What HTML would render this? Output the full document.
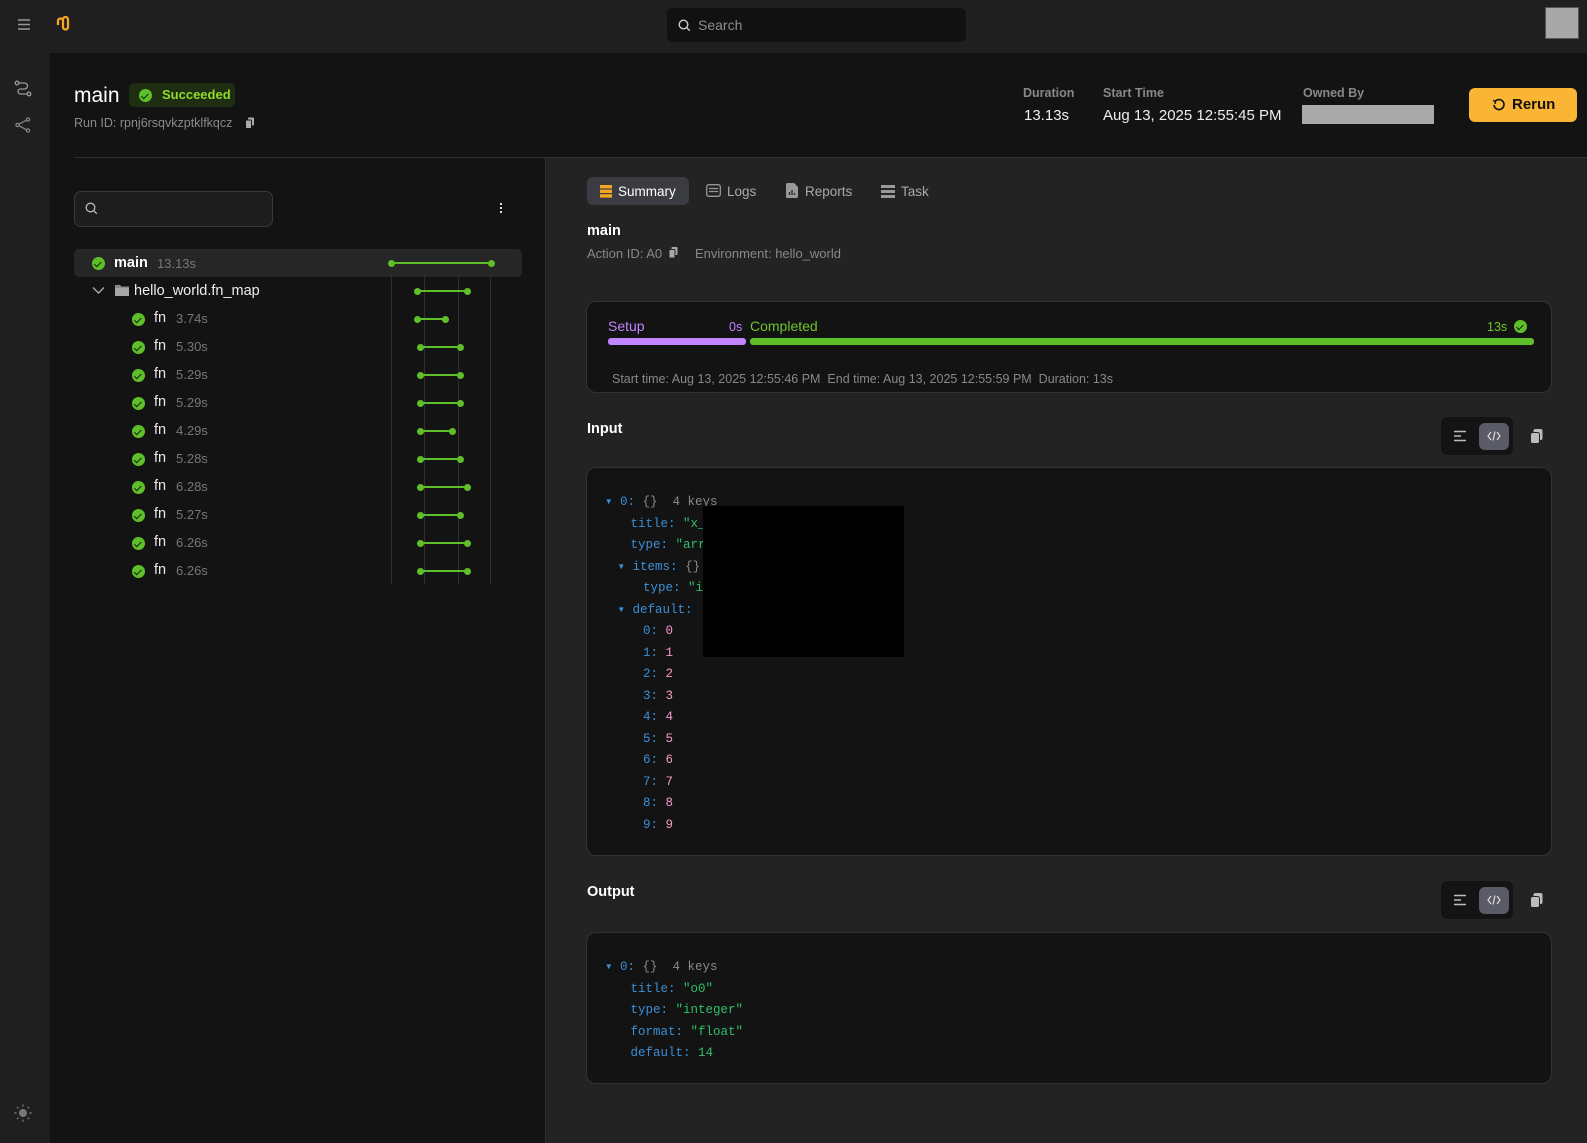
<!DOCTYPE html>
<html><head><meta charset="utf-8"><style>
*{box-sizing:border-box;margin:0;padding:0}
body{width:1587px;height:1143px;background:#131313;font-family:"Liberation Sans",sans-serif;position:relative;overflow:hidden;color:#e8e8e8}
.a{position:absolute}
.mono{font-family:"Liberation Mono",monospace;font-size:12.5px;line-height:21.5px}
.mono div{height:21.5px;white-space:pre}
.i1{padding-left:12.5px}.i2{padding-left:25.5px}.i3{padding-left:38px}
.k{color:#3b8fd6}.s{color:#2fc06a}.n{color:#f49ac8}.g{color:#8a8a8a}
.chk{position:absolute;width:13px;height:13px;border-radius:50%;background:#5fbf2a}
.chk:after{content:"";position:absolute;left:4px;top:2.5px;width:3px;height:5.5px;border:solid #0e2a06;border-width:0 1.6px 1.6px 0;transform:rotate(45deg)}
.bar{position:absolute;height:2px;background:#5fbf2a}
.bar:before,.bar:after{content:"";position:absolute;top:-2.5px;width:7px;height:7px;border-radius:50%;background:#5fbf2a}
.bar:before{left:-3px}.bar:after{right:-3px}
.vl{position:absolute;top:276px;height:308px;width:1px;background:#2e2e2e}
</style></head><body>
<div class="a" style="left:0;top:0;width:1587px;height:53px;background:#1f1f1f"></div>
<div class="a" style="left:0;top:53px;width:50px;height:1090px;background:#1f1f1f"></div>
<svg class="a" style="left:17px;top:18px" width="14" height="13"><path d="M1 2h12M1 6.5h12M1 11h12" stroke="#9a9a9a" stroke-width="1.5"/></svg>
<svg class="a" style="left:55px;top:16px" width="17" height="16" viewBox="0 0 17 16"><path d="M3 9V5a2.5 2.5 0 0 1 5 0v6a2.5 2.5 0 0 0 5 0V5M8 3.5a2.5 2.5 0 0 1 5 0v4" fill="none" stroke="#f5a623" stroke-width="2.3"/></svg>
<div class="a" style="left:667px;top:8px;width:299px;height:34px;background:#111;border-radius:6px"></div>
<svg class="a" style="left:678px;top:19px" width="13" height="13"><circle cx="5.5" cy="5.5" r="4.3" fill="none" stroke="#ccc" stroke-width="1.4"/><path d="M8.6 8.6l3.2 3.2" stroke="#ccc" stroke-width="1.4"/></svg>
<div class="a" style="left:698px;top:17px;font-size:14px;color:#8e8e8e">Search</div>
<div class="a" style="left:1545px;top:7px;width:34px;height:32px;background:#a8a8a8;border:1px solid #555"></div>
<svg class="a" style="left:14px;top:80px" width="18" height="18" viewBox="0 0 18 18"><circle cx="3" cy="3" r="1.8" fill="none" stroke="#9a9a9a" stroke-width="1.3"/><circle cx="15" cy="14" r="1.8" fill="none" stroke="#9a9a9a" stroke-width="1.3"/><path d="M4.5 3h6a3 3 0 0 1 0 6h-4a2.5 2.5 0 0 0 0 5h6.5" fill="none" stroke="#9a9a9a" stroke-width="1.3"/></svg>
<svg class="a" style="left:15px;top:117px" width="16" height="16" viewBox="0 0 16 16"><circle cx="13" cy="2.5" r="1.6" fill="none" stroke="#888" stroke-width="1.2"/><circle cx="2.5" cy="8" r="1.6" fill="none" stroke="#888" stroke-width="1.2"/><circle cx="13" cy="13.5" r="1.6" fill="none" stroke="#888" stroke-width="1.2"/><path d="M4 7.2l7.6-4M4 8.8l7.6 4" stroke="#888" stroke-width="1.2"/></svg>
<svg class="a" style="left:14px;top:1104px" width="18" height="18" viewBox="0 0 18 18"><circle cx="9" cy="9" r="4" fill="#777"/><path d="M9 0.5v2M9 15.5v2M0.5 9h2M15.5 9h2M3 3l1.4 1.4M13.6 13.6l1.4 1.4M3 15l1.4-1.4M13.6 4.4l1.4-1.4" stroke="#777" stroke-width="1.4"/></svg>
<div class="a" style="left:74px;top:84px;font-size:21px;color:#fff">main</div>
<div class="a" style="left:129px;top:83px;width:106px;height:24px;background:#1f2d10;border-radius:5px"></div>
<div class="chk" style="left:139px;top:89px"></div>
<div class="a" style="left:162px;top:87px;font-size:13px;color:#8fdc2a;font-weight:bold">Succeeded</div>
<div class="a" style="left:74px;top:116px;font-size:12.5px;color:#8a8a8a">Run ID: rpnj6rsqvkzptklfkqcz</div>
<svg class="a" style="left:245px;top:117px" width="10" height="12"><rect x="3" y="0.5" width="6" height="8" rx="1" fill="#aaa"/><rect x="0.5" y="3" width="6" height="8.5" rx="1" fill="#aaa" stroke="#131313"/></svg>
<div class="a" style="left:1023px;top:86px;font-size:12.5px;color:#888;font-weight:bold">Duration</div>
<div class="a" style="left:1024px;top:107px;font-size:15px;color:#eee">13.13s</div>
<div class="a" style="left:1103px;top:86px;font-size:12.5px;color:#888;font-weight:bold">Start Time</div>
<div class="a" style="left:1103px;top:107px;font-size:15px;color:#eee">Aug 13, 2025 12:55:45 PM</div>
<div class="a" style="left:1303px;top:86px;font-size:12.5px;color:#888;font-weight:bold">Owned By</div>
<div class="a" style="left:1302px;top:105px;width:132px;height:19px;background:#a9a9a9"></div>
<div class="a" style="left:1469px;top:88px;width:108px;height:34px;background:#fbb535;border-radius:6px"></div>
<svg class="a" style="left:1492px;top:98px" width="14" height="14" viewBox="0 0 14 14"><path d="M3 3.5A5 5 0 1 1 2 7" fill="none" stroke="#111" stroke-width="1.6"/><path d="M1 2.5l2.5 1 -0.5 2.5" fill="none" stroke="#111" stroke-width="1.4"/></svg>
<div class="a" style="left:1512px;top:96px;font-size:15px;color:#111;font-weight:bold">Rerun</div>
<div class="a" style="left:74px;top:157px;width:1513px;height:1px;background:#2e2e2e"></div>
<div class="a" style="left:545px;top:158px;width:1042px;height:985px;background:#232323;border-left:1px solid #2f2f2f"></div>
<div class="a" style="left:74px;top:191px;width:199px;height:36px;border:1px solid #3a3a3a;background:#1d1d1d;border-radius:7px"></div>
<svg class="a" style="left:85px;top:202px" width="14" height="14"><circle cx="5.5" cy="5.5" r="4.3" fill="none" stroke="#bbb" stroke-width="1.3"/><path d="M8.6 8.6l3.2 3.2" stroke="#bbb" stroke-width="1.3"/></svg>
<div class="a" style="left:500px;top:203px;width:2px;height:2px;background:#ddd;box-shadow:0 4px #ddd,0 8px #ddd"></div>
<div class="a" style="left:74px;top:249px;width:448px;height:28px;background:#262626;border-radius:5px"></div>
<div class="vl" style="left:391px"></div><div class="vl" style="left:424px"></div><div class="vl" style="left:458px"></div><div class="vl" style="left:490px"></div>
<div class="chk" style="left:92px;top:257px"></div>
<div class="a" style="left:114px;top:255px;font-size:14.5px;font-weight:bold;color:#fff">main</div>
<div class="a" style="left:157px;top:256px;font-size:13px;color:#777">13.13s</div>
<div class="bar" style="left:391px;top:262px;width:101px"></div>
<svg class="a" style="left:92px;top:286px" width="13" height="9"><path d="M1 1.5l5.5 5.5 5.5-5.5" fill="none" stroke="#aaa" stroke-width="1.4"/></svg>
<svg class="a" style="left:115px;top:284px" width="14" height="12"><path d="M0 1h5l1.5 1.5H14V12H0z" fill="#8a8a8a"/><rect x="0" y="4" width="14" height="8" fill="#a6a6a6"/></svg>
<div class="a" style="left:134px;top:283px;font-size:14.5px;color:#eee">hello_world.fn_map</div>
<div class="bar" style="left:417px;top:290px;width:51px"></div>
<div class="a" style="left:587px;top:177px;width:102px;height:28px;background:#3a3c42;border-radius:6px"></div>
<svg class="a" style="left:600px;top:185px" width="12" height="13"><rect y="0" width="12" height="3.4" fill="#f5a623"/><rect y="4.6" width="12" height="3.4" fill="#f5a623"/><rect y="9.2" width="12" height="3.4" fill="#f5a623"/></svg>
<div class="a" style="left:618px;top:184px;font-size:13.5px;color:#fff">Summary</div>
<svg class="a" style="left:706px;top:184px" width="15" height="13"><rect x="0.7" y="0.7" width="13.6" height="11.6" rx="2" fill="none" stroke="#999" stroke-width="1.3"/><path d="M3 4.5h9M3 7.5h9" stroke="#999" stroke-width="1.3"/></svg>
<div class="a" style="left:727px;top:184px;font-size:13.5px;color:#aaa">Logs</div>
<svg class="a" style="left:786px;top:183px" width="12" height="15"><path d="M0 1.5a1.5 1.5 0 0 1 1.5-1.5H8l4 4v9.5a1.5 1.5 0 0 1-1.5 1.5h-9A1.5 1.5 0 0 1 0 13.5z" fill="#999"/><path d="M3.5 12V9M6 12V7M8.5 12V10" stroke="#232323" stroke-width="1.3"/></svg>
<div class="a" style="left:805px;top:184px;font-size:13.5px;color:#aaa">Reports</div>
<svg class="a" style="left:881px;top:185px" width="14" height="13"><rect y="0" width="14" height="3" fill="#999"/><rect y="5" width="14" height="3" fill="#999"/><rect y="10" width="14" height="3" fill="#999"/></svg>
<div class="a" style="left:901px;top:184px;font-size:13.5px;color:#aaa">Task</div>
<div class="a" style="left:587px;top:223px;font-size:14.5px;font-weight:bold;color:#fff">main</div>
<div class="a" style="left:587px;top:246px;font-size:13px;color:#888">Action ID: A0</div>
<svg class="a" style="left:669px;top:247px" width="9" height="11"><rect x="2.5" y="0" width="6" height="8" rx="1" fill="#aaa"/><rect x="0" y="2.5" width="6" height="8.5" rx="1" fill="#aaa" stroke="#232323"/></svg>
<div class="a" style="left:695px;top:246px;font-size:13px;color:#888">Environment: hello_world</div>
<div class="a" style="left:586px;top:301px;width:966px;height:92px;background:#131313;border:1px solid #333;border-radius:10px"></div>
<div class="a" style="left:608px;top:318px;font-size:14px;color:#c084fc">Setup</div>
<div class="a" style="left:729px;top:320px;font-size:12.5px;color:#c084fc">0s</div>
<div class="a" style="left:750px;top:318px;font-size:14px;color:#6cc52e">Completed</div>
<div class="a" style="left:1487px;top:320px;font-size:12.5px;color:#6cc52e">13s</div>
<div class="chk" style="left:1514px;top:320px"></div>
<div class="a" style="left:608px;top:338px;width:138px;height:7px;background:#c084fc;border-radius:3px"></div>
<div class="a" style="left:750px;top:338px;width:784px;height:7px;background:#5fbf2a;border-radius:3px"></div>
<div class="a" style="left:612px;top:372px;font-size:12.5px;color:#888">Start time: Aug 13, 2025 12:55:46 PM &nbsp;End time: Aug 13, 2025 12:55:59 PM &nbsp;Duration: 13s</div>
<div class="a" style="left:587px;top:421px;font-size:14.5px;font-weight:bold;color:#fff">Input</div>
<div class="a" style="left:1441px;top:417px;width:72px;height:38px;background:#141414;border-radius:6px"></div>
<div class="a" style="left:1479px;top:423px;width:30px;height:27px;background:#5a5b66;border-radius:6px"></div>
<svg class="a" style="left:1453px;top:430px" width="14" height="12"><path d="M1 1.5h12M1 6h7M1 10.5h12" stroke="#bbb" stroke-width="1.4"/></svg>
<svg class="a" style="left:1487px;top:430px" width="14" height="12"><path d="M4 2L1 6l3 4M10 2l3 4-3 4M8 1.5L6 10.5" fill="none" stroke="#ddd" stroke-width="1.2"/></svg>
<svg class="a" style="left:1530px;top:429px" width="13" height="15"><rect x="3.5" y="0" width="9" height="11" rx="2" fill="#bbb"/><rect x="0.5" y="3.5" width="9" height="11" rx="2" fill="#bbb" stroke="#232323"/></svg>
<div class="a" style="left:586px;top:467px;width:966px;height:389px;background:#131313;border:1px solid #333;border-radius:10px"></div>
<div class="a mono" style="left:605px;top:492px"><div><span class="k">▾ 0:</span> <span class="g">{}  4 keys</span></div><div class="i2"><span class="k">title:</span> <span class="s">"x_</span></div><div class="i2"><span class="k">type:</span> <span class="s">"arr</span></div><div class="i1"><span class="k">▾ items:</span> <span class="g">{}</span></div><div class="i3"><span class="k">type:</span> <span class="s">"i</span></div><div class="i1"><span class="k">▾ default:</span></div><div class="i3"><span class="k">0:</span> <span class="n">0</span></div><div class="i3"><span class="k">1:</span> <span class="n">1</span></div><div class="i3"><span class="k">2:</span> <span class="n">2</span></div><div class="i3"><span class="k">3:</span> <span class="n">3</span></div><div class="i3"><span class="k">4:</span> <span class="n">4</span></div><div class="i3"><span class="k">5:</span> <span class="n">5</span></div><div class="i3"><span class="k">6:</span> <span class="n">6</span></div><div class="i3"><span class="k">7:</span> <span class="n">7</span></div><div class="i3"><span class="k">8:</span> <span class="n">8</span></div><div class="i3"><span class="k">9:</span> <span class="n">9</span></div></div>
<div class="a" style="left:703px;top:506px;width:201px;height:151px;background:#000"></div>
<div class="a" style="left:587px;top:884px;font-size:14.5px;font-weight:bold;color:#fff">Output</div>
<div class="a" style="left:1441px;top:881px;width:72px;height:38px;background:#141414;border-radius:6px"></div>
<div class="a" style="left:1479px;top:887px;width:30px;height:27px;background:#5a5b66;border-radius:6px"></div>
<svg class="a" style="left:1453px;top:894px" width="14" height="12"><path d="M1 1.5h12M1 6h7M1 10.5h12" stroke="#bbb" stroke-width="1.4"/></svg>
<svg class="a" style="left:1487px;top:894px" width="14" height="12"><path d="M4 2L1 6l3 4M10 2l3 4-3 4M8 1.5L6 10.5" fill="none" stroke="#ddd" stroke-width="1.2"/></svg>
<svg class="a" style="left:1530px;top:893px" width="13" height="15"><rect x="3.5" y="0" width="9" height="11" rx="2" fill="#bbb"/><rect x="0.5" y="3.5" width="9" height="11" rx="2" fill="#bbb" stroke="#232323"/></svg>
<div class="a" style="left:586px;top:932px;width:966px;height:152px;background:#131313;border:1px solid #333;border-radius:10px"></div>
<div class="a mono" style="left:605px;top:957px"><div><span class="k">▾ 0:</span> <span class="g">{}  4 keys</span></div><div class="i2"><span class="k">title:</span> <span class="s">"o0"</span></div><div class="i2"><span class="k">type:</span> <span class="s">"integer"</span></div><div class="i2"><span class="k">format:</span> <span class="s">"float"</span></div><div class="i2"><span class="k">default:</span> <span class="s">14</span></div></div>
<div class="chk" style="left:132px;top:313px"></div><div class="a" style="left:154px;top:310px;font-size:14.5px">fn</div><div class="a" style="left:176px;top:311px;font-size:13px;color:#777">3.74s</div><div class="bar" style="left:417px;top:318px;width:29px"></div>
<div class="chk" style="left:132px;top:341px"></div><div class="a" style="left:154px;top:338px;font-size:14.5px">fn</div><div class="a" style="left:176px;top:339px;font-size:13px;color:#777">5.30s</div><div class="bar" style="left:420px;top:346px;width:41px"></div>
<div class="chk" style="left:132px;top:369px"></div><div class="a" style="left:154px;top:366px;font-size:14.5px">fn</div><div class="a" style="left:176px;top:367px;font-size:13px;color:#777">5.29s</div><div class="bar" style="left:420px;top:374px;width:41px"></div>
<div class="chk" style="left:132px;top:397px"></div><div class="a" style="left:154px;top:394px;font-size:14.5px">fn</div><div class="a" style="left:176px;top:395px;font-size:13px;color:#777">5.29s</div><div class="bar" style="left:420px;top:402px;width:41px"></div>
<div class="chk" style="left:132px;top:425px"></div><div class="a" style="left:154px;top:422px;font-size:14.5px">fn</div><div class="a" style="left:176px;top:423px;font-size:13px;color:#777">4.29s</div><div class="bar" style="left:420px;top:430px;width:33px"></div>
<div class="chk" style="left:132px;top:453px"></div><div class="a" style="left:154px;top:450px;font-size:14.5px">fn</div><div class="a" style="left:176px;top:451px;font-size:13px;color:#777">5.28s</div><div class="bar" style="left:420px;top:458px;width:41px"></div>
<div class="chk" style="left:132px;top:481px"></div><div class="a" style="left:154px;top:478px;font-size:14.5px">fn</div><div class="a" style="left:176px;top:479px;font-size:13px;color:#777">6.28s</div><div class="bar" style="left:420px;top:486px;width:48px"></div>
<div class="chk" style="left:132px;top:509px"></div><div class="a" style="left:154px;top:506px;font-size:14.5px">fn</div><div class="a" style="left:176px;top:507px;font-size:13px;color:#777">5.27s</div><div class="bar" style="left:420px;top:514px;width:41px"></div>
<div class="chk" style="left:132px;top:537px"></div><div class="a" style="left:154px;top:534px;font-size:14.5px">fn</div><div class="a" style="left:176px;top:535px;font-size:13px;color:#777">6.26s</div><div class="bar" style="left:420px;top:542px;width:48px"></div>
<div class="chk" style="left:132px;top:565px"></div><div class="a" style="left:154px;top:562px;font-size:14.5px">fn</div><div class="a" style="left:176px;top:563px;font-size:13px;color:#777">6.26s</div><div class="bar" style="left:420px;top:570px;width:48px"></div>
</body></html>
